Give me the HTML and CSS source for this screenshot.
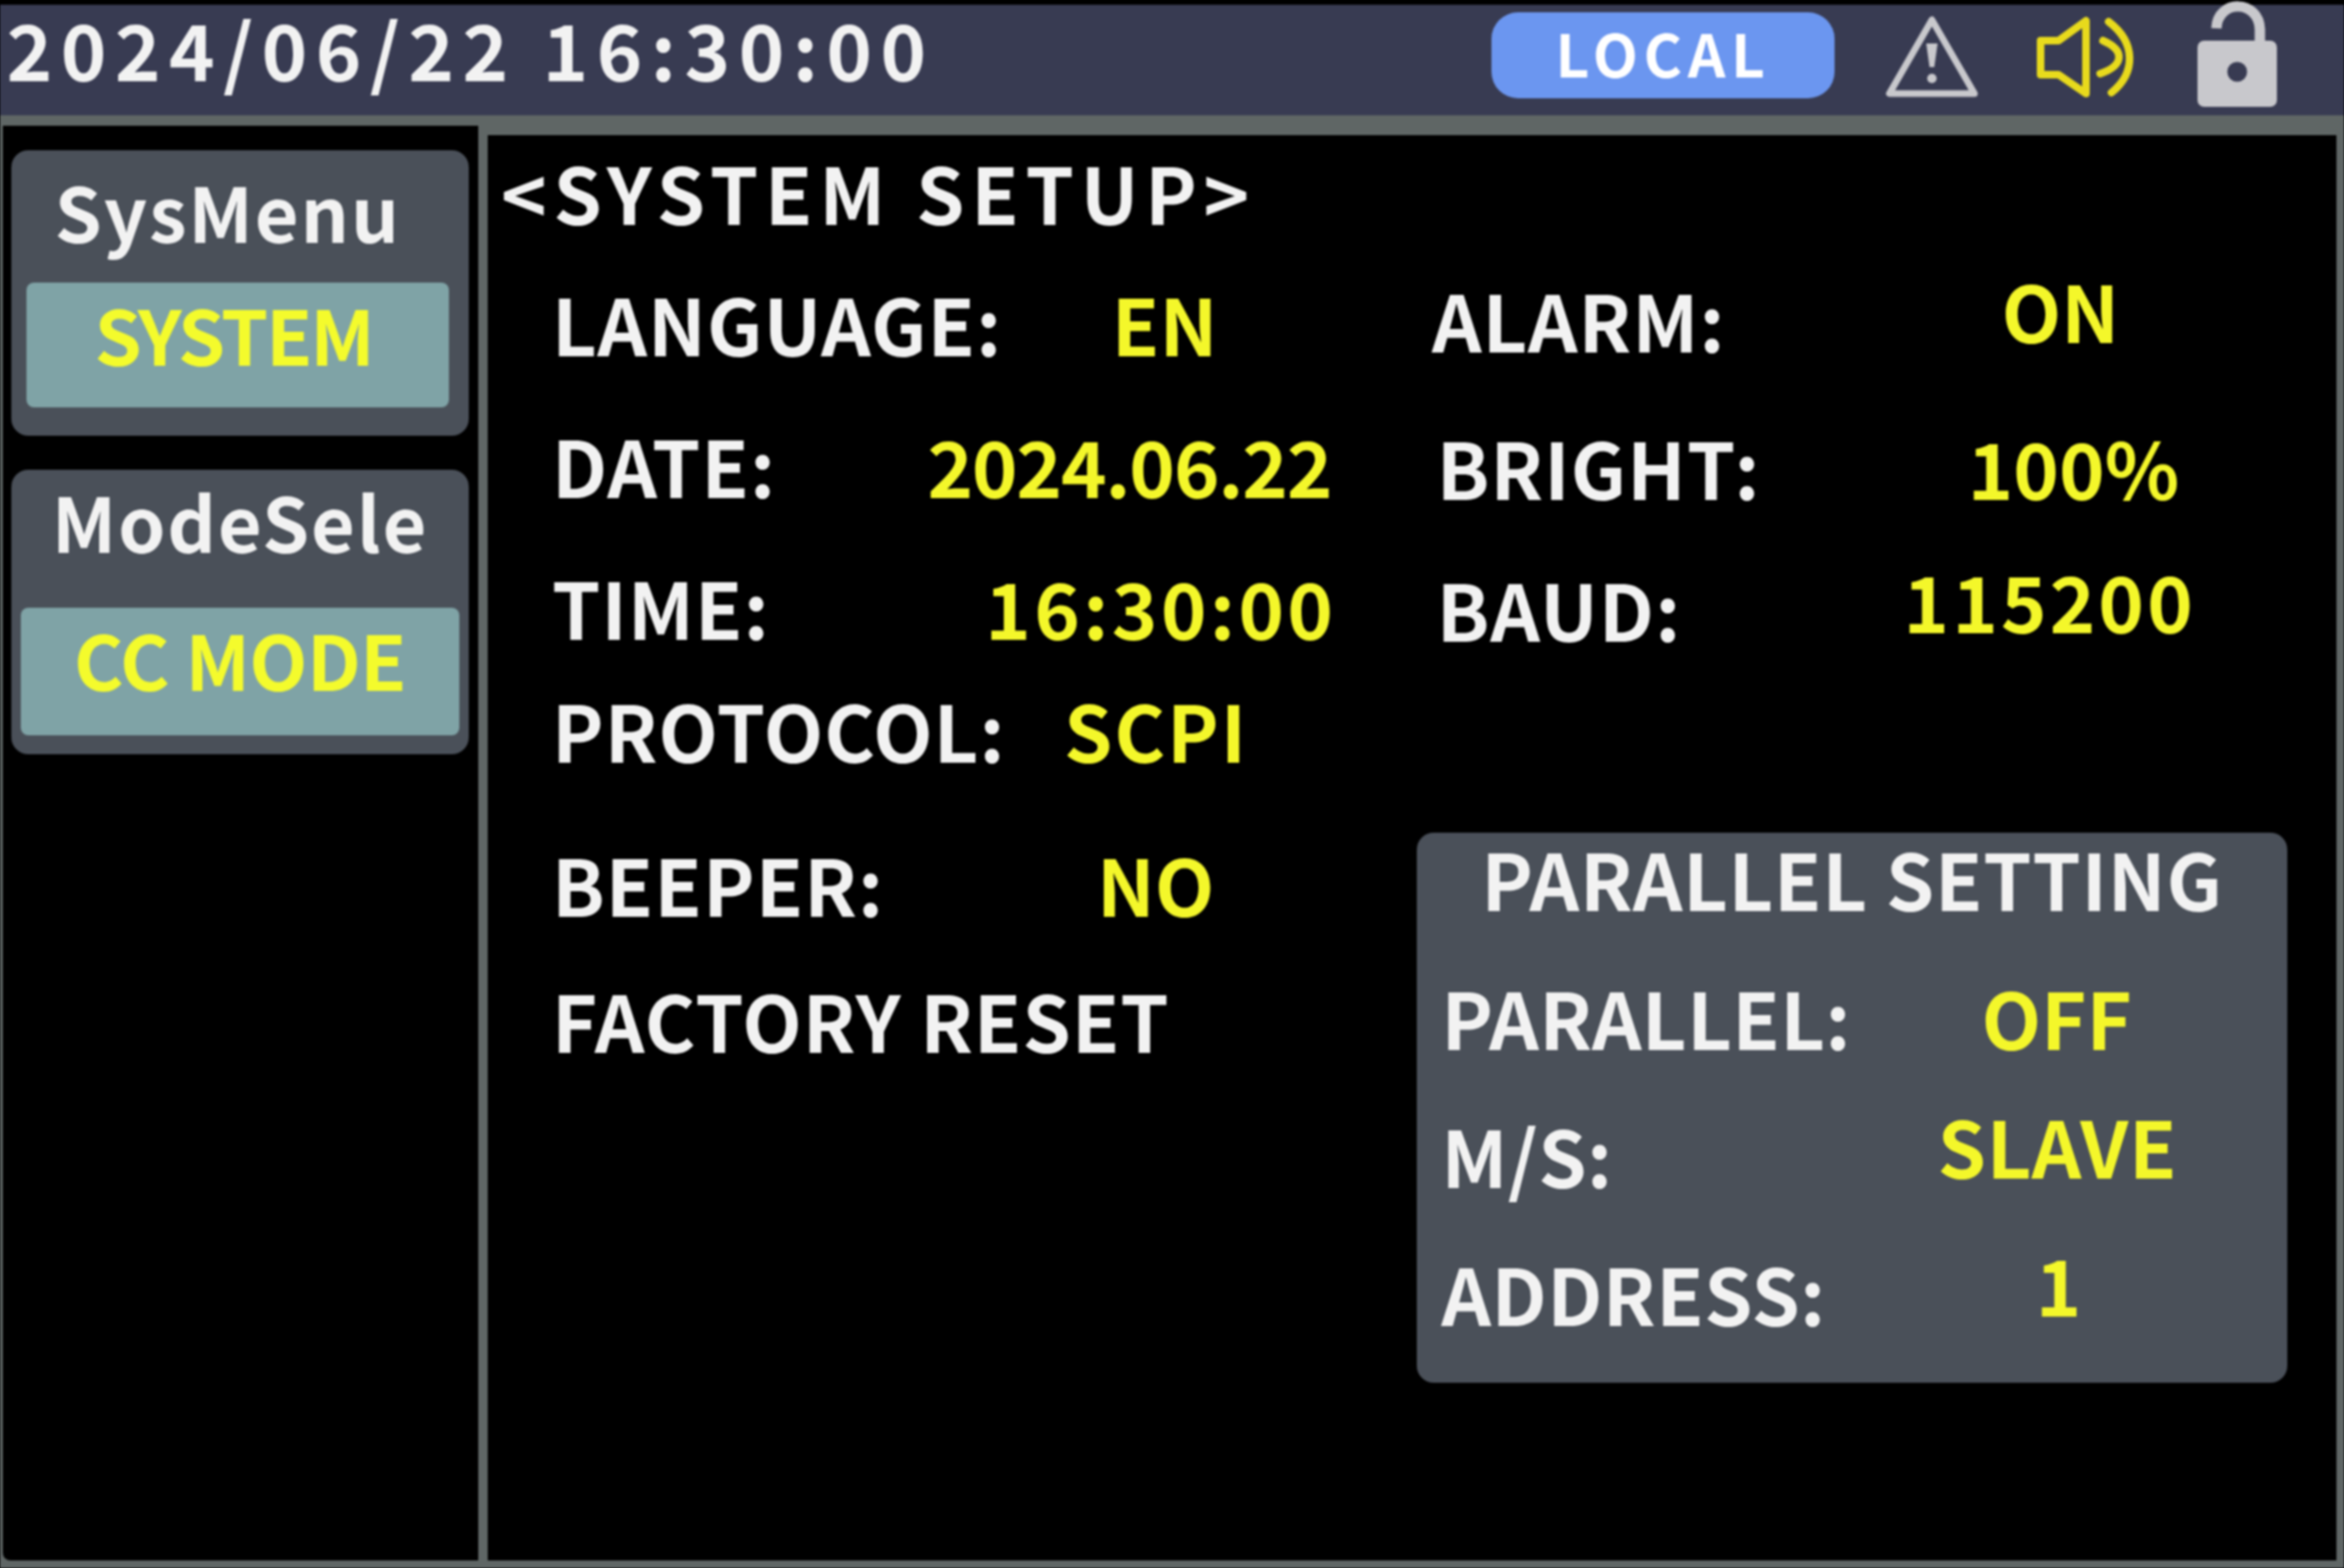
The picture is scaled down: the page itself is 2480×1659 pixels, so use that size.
FILE: index.html
```html
<!DOCTYPE html>
<html lang="en">
<head>
<meta charset="utf-8">
<title>System Setup</title>
<link rel="stylesheet" href="styles.css">
</head>
<body>
<div class="app">
  <header class="topbar">
    <div class="clock">2024/06/22 16:30:00</div>
    <div class="pill">LOCAL</div>
    <svg class="icon icon-warn" viewBox="0 0 110 117" width="110" height="117" aria-hidden="true">
      <path class="warn-line" d="M54 16 L9 94 H99 Z"/>
      <path class="warn-bang" d="M48 41 H60 L56.5 66 H51.5 Z"/>
      <circle class="warn-dot" cx="54" cy="78" r="5"/>
    </svg>
    <svg class="icon icon-sound" viewBox="0 0 110 117" width="110" height="117" aria-hidden="true">
      <path class="sound-line" d="M9 38 H28 L57 17 V94 L28 74 H9 Z"/>
      <path class="sound-line" d="M81 18 C110 40 110 72 84 93"/>
      <path class="sound-line" d="M75 38 C98 48 98 64 72 73"/>
    </svg>
    <svg class="icon icon-lock" viewBox="0 0 95 117" width="95" height="117" aria-hidden="true">
      <path class="lock-arc" d="M25 25 C26 -6 70 -6 71 26 V45"/>
      <rect class="lock-body" x="5" y="38" width="84" height="70" rx="7"/>
      <circle class="lock-hole" cx="47" cy="71" r="10.5"/>
    </svg>
  </header>
  <div class="body">
    <aside class="side">
      <section class="card card-sys">
        <h2 class="card-title">SysMenu</h2>
        <div class="card-btn">SYSTEM</div>
      </section>
      <section class="card card-mode">
        <h2 class="card-title">ModeSele</h2>
        <div class="card-btn card-btn-mode">CC MODE</div>
      </section>
    </aside>
    <main class="main">
      <h1 class="heading">&lt;SYSTEM SETUP&gt;</h1>
      <div class="cols">
        <div class="col-left">
          <div class="row"><span class="label">LANGUAGE:</span><span class="val v-lang">EN</span></div>
          <div class="row"><span class="label">DATE:</span><span class="val v-date">2024.06.22</span></div>
          <div class="row"><span class="label">TIME:</span><span class="val v-time">16:30:00</span></div>
          <div class="row row-tight"><span class="label">PROTOCOL:</span><span class="val v-proto">SCPI</span></div>
          <div class="row row-beep"><span class="label">BEEPER:</span><span class="val v-beep">NO</span></div>
          <div class="row"><span class="label">FACTORY RESET</span></div>
        </div>
        <div class="col-right">
          <div class="row r-alarm"><span class="label">ALARM:</span><span class="val v-alarm">ON</span></div>
          <div class="row r-bright"><span class="label">BRIGHT:</span><span class="val v-bright">100%</span></div>
          <div class="row r-baud"><span class="label">BAUD:</span><span class="val v-baud">115200</span></div>
          <section class="panel">
            <h2 class="panel-title">PARALLEL SETTING</h2>
            <div class="prow"><span class="label">PARALLEL:</span><span class="val v-par">OFF</span></div>
            <div class="prow"><span class="label">M/S:</span><span class="val v-ms">SLAVE</span></div>
            <div class="prow"><span class="label">ADDRESS:</span><span class="val v-addr">1</span></div>
          </section>
        </div>
      </div>
    </main>
  </div>
</div>
</body>
</html>
```
FILE: styles.css
```css
* { box-sizing: border-box; margin: 0; padding: 0; }
html, body { width: 2480px; height: 1659px; background: #000; overflow: hidden; }
body { font-family: "Noto Sans CJK SC", "Noto Sans", sans-serif; color: #f2f2f2; }
.app { width: 2480px; height: 1659px; padding-top: 5px; display: flex; flex-direction: column; filter: blur(1.2px); }

.topbar { height: 117px; background: #383b52; display: flex; align-items: flex-start; padding-left: 7px; flex: none; }
.clock { font-size: 82px; font-weight: 700; line-height: 92px; letter-spacing: 8.9px; width: 1571px; white-space: nowrap; }
.pill { width: 363px; height: 91px; margin-top: 8px; border-radius: 28px; background: #6b96f0; color: #fff; font-size: 62px; font-weight: 700; line-height: 85px; letter-spacing: 6px; text-align: center; }
.icon { display: block; flex: none; overflow: visible; }
.icon-warn { margin-left: 49px; }
.icon-sound { margin-left: 50px; }
.icon-lock { margin-left: 60px; }
.warn-line { fill: none; stroke: #c8c8cc; stroke-width: 7; stroke-linejoin: round; }
.warn-bang { fill: #c8c8cc; }
.warn-dot { fill: #c8c8cc; }
.sound-line { fill: none; stroke: #e8da1c; stroke-width: 8; stroke-linejoin: round; stroke-linecap: round; }
.lock-arc { fill: none; stroke: #c8c8cc; stroke-width: 11; }
.lock-body { fill: #c8c8cc; }
.lock-hole { fill: #383b52; }

.body { flex: 1; display: flex; background: #5f6665; padding: 11px 8px 8px 3px; min-height: 0; }
.side { width: 503px; flex: none; background: #000; padding: 26px 10px 0 9px; border-bottom-left-radius: 8px; }
.card { background: #4a5059; border-radius: 18px; }
.card-sys { height: 302px; padding: 7px 21px 0 16px; }
.card-mode { height: 301px; margin-top: 36px; padding: 0 10px; }
.card-title { font-size: 80px; font-weight: 700; line-height: 112px; letter-spacing: 2px; text-align: center; color: #f2f2f2; white-space: nowrap; }
.card-sys .card-title { margin-right: 21px; }
.card-mode .card-title { line-height: 106px; }
.card-btn { height: 132px; margin-top: 21px; background: #7fa3a6; border-radius: 8px; color: #f4fb2c; font-size: 80px; font-weight: 700; line-height: 106px; letter-spacing: -2.4px; text-align: center; padding-right: 9px; }
.card-btn-mode { height: 135px; margin-top: 40px; line-height: 107px; letter-spacing: -0.7px; padding-right: 0; }

.main { flex: 1; margin-left: 10px; margin-top: 10px; background: #000; padding-left: 14px; min-width: 0; }
.heading { font-size: 82px; font-weight: 700; line-height: 110px; letter-spacing: 7px; margin-top: 5px; margin-bottom: 1px; color: #f2f2f2; white-space: nowrap; }
.cols { display: flex; }
.col-left { width: 969px; padding-left: 54px; padding-top: 8px; flex: none; }
.row { display: flex; height: 150px; align-items: center; white-space: nowrap; font-size: 82px; font-weight: 700; line-height: 110px; }
.row-tight { height: 110px; }
.row-beep { height: 138px; margin-top: 39px; }
.label { color: #f2f2f2; letter-spacing: 1px; }
.val { color: #f4f72a; }
.col-right { flex: 1; }
.r-alarm { height: 158px; padding-left: 16px; }
.r-bright { height: 154px; padding-left: 21px; }
.r-baud { height: 146px; padding-left: 21px; }
.panel { width: 921px; height: 582px; background: #4a5059; border-radius: 18px; font-size: 82px; font-weight: 700; margin-top: 164px; padding: 0 26px; }
.panel-title { font: inherit; line-height: 96px; letter-spacing: 0.7px; text-align: center; margin-bottom: 26px; white-space: nowrap; }
.prow { display: flex; align-items: center; height: 146px; line-height: 110px; white-space: nowrap; }
.prow .label { letter-spacing: 0.4px; }

.v-lang { margin-left: 116px; }
.v-date { margin-left: 160px; letter-spacing: -1.3px; }
.v-time { margin-left: 228px; letter-spacing: 3.5px; }
.v-proto { margin-left: 62px; letter-spacing: 2px; }
.v-beep { margin-left: 225px; }
.v-alarm { margin-left: 292px; margin-bottom: 20px; }
.v-bright { margin-left: 219px; }
.v-baud { margin-left: 235px; margin-bottom: 18px; letter-spacing: 3.2px; }
.v-par { margin-left: 138px; }
.v-ms { margin-left: 344px; margin-bottom: 20px; letter-spacing: 0.6px; }
.v-addr { margin-left: 222px; margin-bottom: 20px; }
```
